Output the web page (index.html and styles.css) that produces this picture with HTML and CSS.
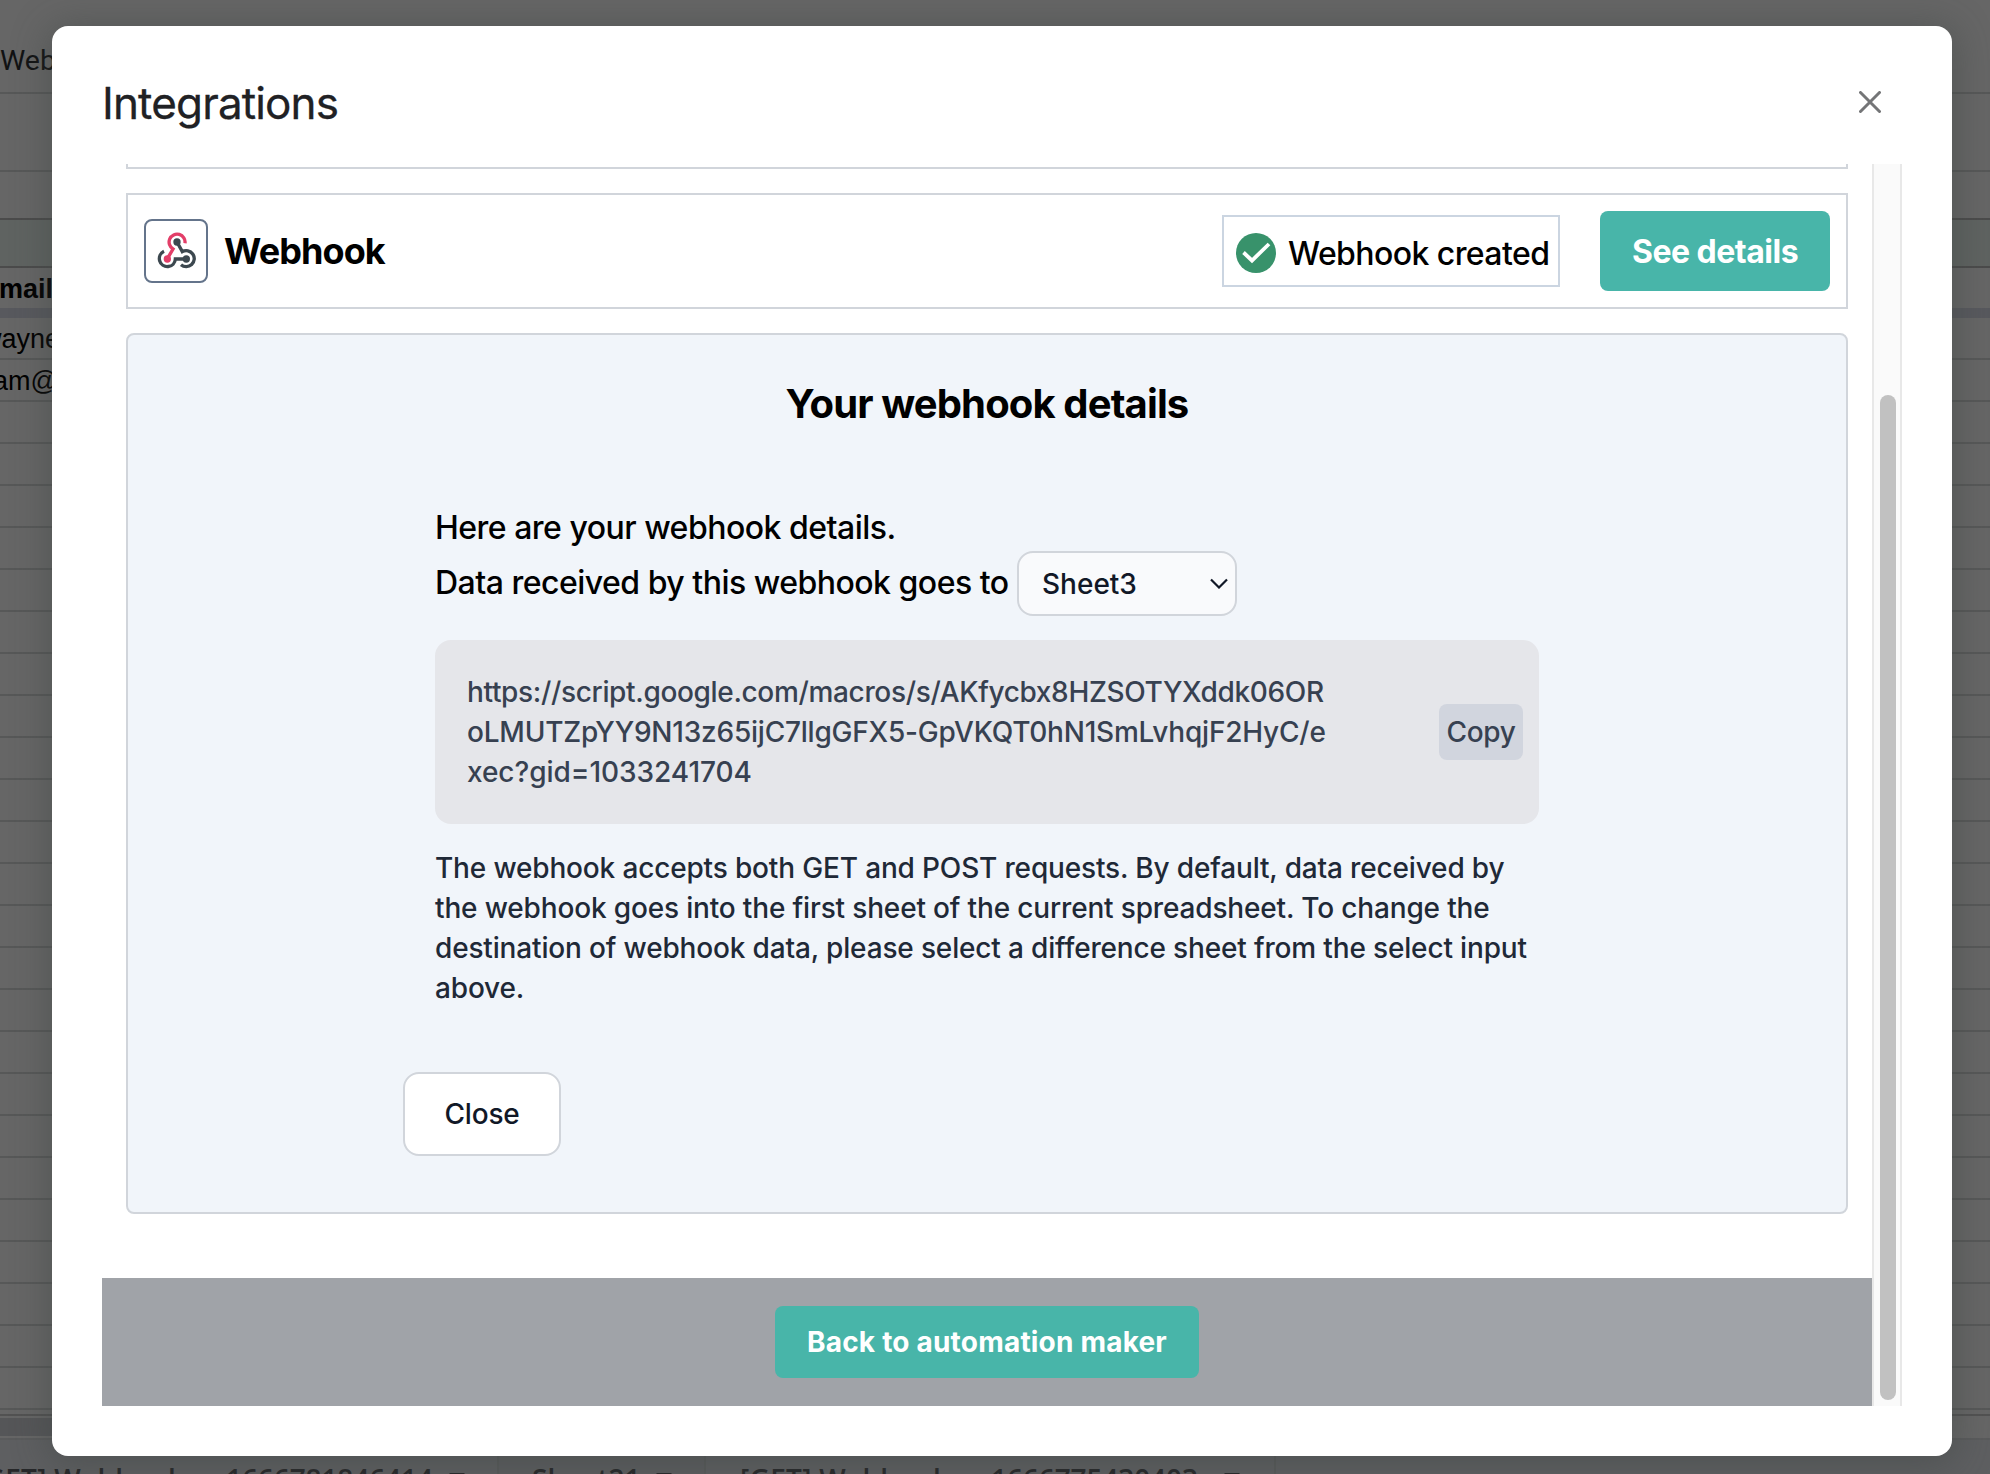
FILE: index.html
```html
<!DOCTYPE html>
<html lang="en">
<head>
<meta charset="utf-8">
<title>Integrations</title>
<link rel="stylesheet" href="styles.css">
</head>
<body>
<div class="sheet">
  <div class="menu-row">Webhook</div>
  <div class="tool-row"></div>
  <div class="formula-row"></div>
  <div class="column-row"></div>
  <div class="head-row">Email</div>
  <div class="frozen-bar"></div>
  <div class="cell-row first"><span class="wayne">wayne@</span></div>
  <div class="cell-row"><span class="adam">am@</span></div>
  <div class="cells"></div>
  <div class="grid-end"></div>
  <div class="hscroll"><span class="hthumb"></span></div>
  <div class="tabs">
    <div class="tab tab-a"><span class="label">[GET] Webhook</span><span>–</span><span class="num">1666781846414</span><i class="caret"></i></div>
    <div class="tab tab-b"><span class="label">Sheet21</span><i class="caret"></i></div>
    <div class="tab tab-c"><span class="label">[GET] Webhook</span><span>–</span><span class="num">1666775430403</span><i class="caret"></i></div>
  </div>
</div>
<div class="modal">
  <header class="modal-head">
    <h1>Integrations</h1>
    <svg class="x" width="22" height="22" viewBox="0 0 22 22"><path d="M1.5 1.5l19 19M20.500 1.500l-19 19"/></svg>
  </header>
  <div class="scroller">
    <main class="content">
      <div class="prev-card"></div>
      <section class="card">
        <div class="logo">
          <svg width="40" height="37.300" viewBox="0 0 120 112" fill="none" stroke-width="10">
            <path class="dark" d="M21 58A24 24 0 1 0 55 81H88"/>
            <path class="dark" d="M60 30L76 59A24 24 0 1 1 72 98"/>
            <path class="pink" d="M84 34A24 24 0 1 0 48 51L31 80"/>
            <circle class="dark-dot" cx="60" cy="30" r="11"/>
            <circle class="dark-dot" cx="88" cy="81" r="11"/>
            <circle class="pink-dot" cx="31" cy="81" r="11"/>
          </svg>
        </div>
        <h2>Webhook</h2>
        <div class="status">
          <svg width="40" height="40" viewBox="0 0 40 40"><circle cx="20" cy="20" r="20"/><path d="M7.500 19.500l8.500 8L33 11"/></svg>
          <span>Webhook created</span>
        </div>
        <button class="primary details">See details</button>
      </section>
      <section class="panel">
        <h3>Your webhook details</h3>
        <div class="body">
          <p class="lead">Here are your webhook details.</p>
          <div class="dest"><span class="lead">Data received by this webhook goes to</span>
            <div class="select"><span>Sheet3</span><svg width="18" height="11" viewBox="0 0 18 11"><path d="M1 1.500l8 8 8-8"/></svg></div>
          </div>
          <div class="url">
            <div class="link"><span class="tight">https://script.google.com/macros/s/AKfycbx8HZSOTYXddk06OR</span><br><span class="snug">oLMUTZpYY9N13z65ijC7llgGFX5-GpVKQT0hN1SmLvhqjF2HyC/e</span><br>xec?gid=1033241704</div>
            <button class="copy">Copy</button>
          </div>
          <p class="note">The webhook accepts both GET and POST requests. By default, data received by<br>the webhook goes into the first sheet of the current spreadsheet. To change the<br>destination of webhook data, please select a difference sheet from the select input<br>above.</p>
        </div>
        <button class="close">Close</button>
      </section>
      <footer><button class="primary back">Back to automation maker</button></footer>
    </main>
    <div class="track"><div class="thumb"></div></div>
  </div>
</div>
</body>
</html>
```
FILE: styles.css
```css
* { box-sizing: border-box; }
body { margin: 0; width: 1990px; height: 1474px; overflow: hidden; position: relative; background: #666; font-family: Inter, sans-serif; }
h1, h2, h3, p { margin: 0; }
button { font-family: inherit; border: 0; padding: 0; }
svg { display: block; flex: none; }

.sheet { height: 1474px; overflow: hidden; display: flex; flex-direction: column; white-space: nowrap; color: #000; font-family: "Liberation Sans", Arial, sans-serif; font-size: 27px; }
.sheet > div { flex: none; }
.menu-row { height: 94px; border-bottom: 2px solid #575858; padding: 27px 0 0; font: 28.5px/68px Roboto, sans-serif; color: #111213; }
.tool-row { height: 78px; border-bottom: 2px solid #575858; }
.formula-row { height: 48px; border-bottom: 2px solid #4b4b4b; }
.column-row { height: 48px; border-bottom: 2px solid #4b4b4b; background: #5f6361; }
.head-row { height: 40px; font-weight: bold; font-size: 27px; line-height: 42px; text-indent: -19px; }
.frozen-bar { height: 10px; background: #58595e; }
.cell-row { height: 42px; line-height: 42px; border-bottom: 2px solid #575858; }
.cell-row span { display: block; }
.wayne { margin-left: -18px; }
.adam { margin-left: -7px; }
.cells { height: 1008px; background: repeating-linear-gradient(#666 0 40px, #575858 40px 42px); }
.grid-end { height: 6px; border-bottom: 2px solid #525252; }
.hscroll { height: 22px; padding-top: 2px; }
.hthumb { display: block; width: 500px; height: 18px; background: #555658; }
.tabs { height: 36px; border-top: 2px solid #5a5b5c; background: #5e5f61; display: flex; font: 600 28px/40px "Open Sans", sans-serif; color: #262729; }
.tab { display: flex; align-items: flex-start; padding-top: 19px; border-right: 2px solid #585a5a; height: 36px; }
.tab-a { width: 524px; margin-left: -25px; }
.tab-b { width: 207px; padding-left: 33px; background: #5c5d5f; }
.tab-c { width: 570px; padding-left: 34px; }
.tab .num { margin-left: 11px; width: 212px; letter-spacing: -.1px; }
.tab .label + span { margin-left: 12px; width: 18px; }
.tab-a .label, .tab-c .label { width: 210px; letter-spacing: .3px; }
.tab-b .label { width: 104px; }
.caret { border: 8px solid transparent; border-top-color: #262729; border-bottom: 0; margin: 14px 0 0 20px; }
.tab .num + .caret { margin-left: 11px; }
.tab-c .num + .caret { margin-left: 21px; }

.modal { position: absolute; left: 52px; top: 26px; width: 1900px; height: 1430px; border-radius: 16px; background: #fff; padding: 0 50px; box-shadow: 0 4px 36px 4px rgba(60, 66, 64, .45); }
.modal-head { height: 138px; display: flex; justify-content: space-between; padding-right: 21px; }
h1 { font-weight: 400; font-size: 44px; line-height: 54px; letter-spacing: -.85px; color: #202124; margin: 50px 0 0; -webkit-text-stroke: .3px #202124; }
.x { margin-top: 65px; fill: none; stroke: #747577; stroke-width: 3; stroke-linecap: round; }
.scroller { height: 1242px; display: flex; }
.content { width: 1770px; overflow: hidden; display: flex; flex-direction: column; }
.prev-card { height: 5px; margin: 0 24px; border: 2px solid #d1d5db; border-top: 0; flex: none; }
.card { height: 116px; margin: 24px 24px 0; border: 2px solid #d1d5db; padding: 0 16px; display: flex; align-items: center; flex: none; }
.logo { width: 64px; height: 64px; border: 2px solid #64748b; border-radius: 8px; display: flex; align-items: center; justify-content: center; padding-left: 1px; }
.dark { stroke: #3c484f; }
.pink { stroke: #e33e68; }
.dark-dot { fill: #3c484f; }
.pink-dot { fill: #e33e68; }
h2 { font-size: 36px; line-height: 40px; font-weight: 700; letter-spacing: -.9px; margin-left: 16px; flex: 1; }
.status { width: 338px; height: 72px; border: 2px solid #cbd5e1; display: flex; align-items: center; padding-left: 12px; gap: 12px; font-size: 32px; font-weight: 500; margin-right: 40px; white-space: nowrap; letter-spacing: -.58px; padding-top: 4px; }
.status svg { fill: #38926b; }
.status path { fill: none; stroke: #fff; stroke-width: 3.800; }
.primary { background: #48b5a9; color: #fff; font-weight: 700; border-radius: 8px; }
.details { width: 230px; height: 80px; font-size: 32px; letter-spacing: -.5px; }
.panel { height: 881px; margin: 24px 24px 0; border: 2px solid #d1d5db; border-radius: 8px; background: #f1f5fa; flex: none; }
h3 { text-align: center; font-size: 40px; line-height: 48px; font-weight: 700; letter-spacing: -.88px; margin-top: 45px; }
.body { width: 1104px; margin: 72px 0 0 307px; }
.lead { font-size: 32px; line-height: 56px; font-weight: 500; white-space: nowrap; letter-spacing: -.51px; }
.dest { display: flex; align-items: center; justify-content: space-between; width: 802px; height: 65px; margin-top: -5px; }
.dest .lead { margin-top: -2px; }
.select { width: 220px; height: 65px; border: 2px solid #d1d5db; border-radius: 16px; background: #f9fafc; display: flex; align-items: center; justify-content: space-between; padding: 0 7px 0 23px; font-size: 28px; font-weight: 500; color: #111827; }
.select path { fill: none; stroke: #111827; stroke-width: 2.200; }
.url { height: 184px; margin-top: 24px; border-radius: 16px; background: #e5e6ea; display: flex; align-items: center; justify-content: space-between; padding: 0 16px 0 32px; }
.link { font-size: 28px; line-height: 40px; font-weight: 500; color: #374151; white-space: nowrap; letter-spacing: -.04px; }
.tight { letter-spacing: -.34px; }
.snug { letter-spacing: -.22px; }
.copy { width: 84px; height: 56px; background: #d1d5de; border-radius: 8px; font-size: 28px; font-weight: 500; color: #374151; letter-spacing: -.3px; }
.note { font-size: 28px; line-height: 40px; font-weight: 500; color: #1f2937; margin-top: 24px; white-space: nowrap; letter-spacing: -.16px; }
.close { display: block; width: 158px; height: 84px; margin: 64px 0 0 275px; border: 2px solid #d1d5db; border-radius: 16px; background: #fff; font-size: 28px; font-weight: 500; color: #111827; letter-spacing: -.2px; }
footer { height: 128px; margin-top: 64px; background: #a0a3a8; display: flex; align-items: center; justify-content: center; flex: none; }
.back { width: 424px; height: 72px; font-size: 28px; letter-spacing: .2px; }
.track { width: 30px; border: solid #e8e8e8; border-width: 0 2px; background: #fafafa; padding: 231px 0 0 6px; }
.thumb { width: 16px; height: 1005px; border-radius: 8px; background: #c1c1c1; }
```
